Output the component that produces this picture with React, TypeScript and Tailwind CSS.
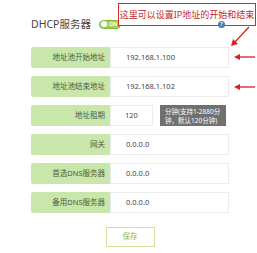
import React from "react";

type Row = { label: string; value: string; hint?: string };

const rows: Row[] = [
  { label: "地址池开始地址", value: "192.168.1.100" },
  { label: "地址池结束地址", value: "192.168.1.102" },
  { label: "地址租期", value: "120", hint: "分钟(支持1-2880分钟，默认120分钟)" },
  { label: "网关", value: "0.0.0.0" },
  { label: "首选DNS服务器", value: "0.0.0.0" },
  { label: "备用DNS服务器", value: "0.0.0.0" },
];

const font = { fontFamily: '"Noto Sans", "Noto Sans CJK SC", sans-serif' };

export default function App() {
  return (
    <div
      className="relative w-[257px] h-[253px] bg-white overflow-hidden"
      style={font}
    >
      {/* Header */}
      <div className="flex items-center h-[47px] pl-[31px] pt-[1px]">
        <span className="text-[10.5px] text-[#444] leading-none">DHCP服务器</span>
        <div className="ml-[8px] flex items-center w-[22px] h-[9px] rounded-full bg-[#9ed05a] border border-[#7fb83a]">
          <span className="ml-[1px] w-[6px] h-[6px] rounded-full bg-white" />
          <span className="ml-[2px] text-[5px] leading-none font-bold text-white">ON</span>
        </div>
      </div>

      {/* Rows */}
      <div className="flex flex-col gap-[8px] pl-[31px]">
        {rows.map((row) => (
          <div key={row.label} className="flex items-stretch h-[21px]">
            <div className="w-[79px] bg-[#c9e7aa] rounded-l-[2px] flex items-center justify-end pr-[5px] text-[7.5px] text-[#4e5d3e] leading-none whitespace-nowrap">
              {row.label}
            </div>
            {row.hint ? (
              <div className="flex items-stretch">
                <div className="w-[43px] border border-[#ececec] bg-white flex items-center pl-[14px] text-[7.5px] text-[#444] leading-none">
                  {row.value}
                </div>
                <div className="ml-[7px] w-[66px] bg-[#707070] text-white text-[6.5px] leading-[9px] px-[5px] pt-[1px] flex items-center">
                  {row.hint}
                </div>
              </div>
            ) : (
              <div className="w-[119px] border border-[#ececec] bg-white flex items-center pl-[15px] text-[7.5px] text-[#444] leading-none">
                {row.value}
              </div>
            )}
          </div>
        ))}
      </div>

      {/* Save */}
      <div className="flex justify-center pl-[31px] pr-[28px] mt-[14px]">
        <button className="w-[49px] h-[20px] border border-[#d4e19a] bg-white text-[#8cb83a] text-[7.5px] leading-none">
          保存
        </button>
      </div>

      {/* Annotation callout */}
      <div className="absolute left-[118px] top-[3px] w-[138px] h-[23px] border-[1.5px] border-[#d62b2b] bg-white flex items-center justify-center">
        <span className="text-[9px] text-[#c42a2a] leading-none whitespace-nowrap">
          这里可以设置IP地址的开始和结束
        </span>
      </div>
      <div className="absolute left-[218px] top-[21px] w-[7px] h-[7px] rounded-full bg-[#4a78b4] text-white text-[5px] leading-[7px] text-center font-bold">
        ?
      </div>

      {/* Arrows */}
      <svg
        className="absolute left-0 top-0"
        width="257"
        height="253"
        viewBox="0 0 257 253"
      >
        <g stroke="#d62020" strokeWidth="1.3" fill="#d62020">
          <line x1="249" y1="27" x2="234" y2="43" />
          <polygon points="231,46 233,39 238,44" stroke="none" />
          <line x1="255" y1="57" x2="238" y2="57" />
          <polygon points="234,57 240,54 240,60" stroke="none" />
          <line x1="255" y1="87" x2="238" y2="87" />
          <polygon points="234,87 240,84 240,90" stroke="none" />
        </g>
      </svg>
    </div>
  );
}
